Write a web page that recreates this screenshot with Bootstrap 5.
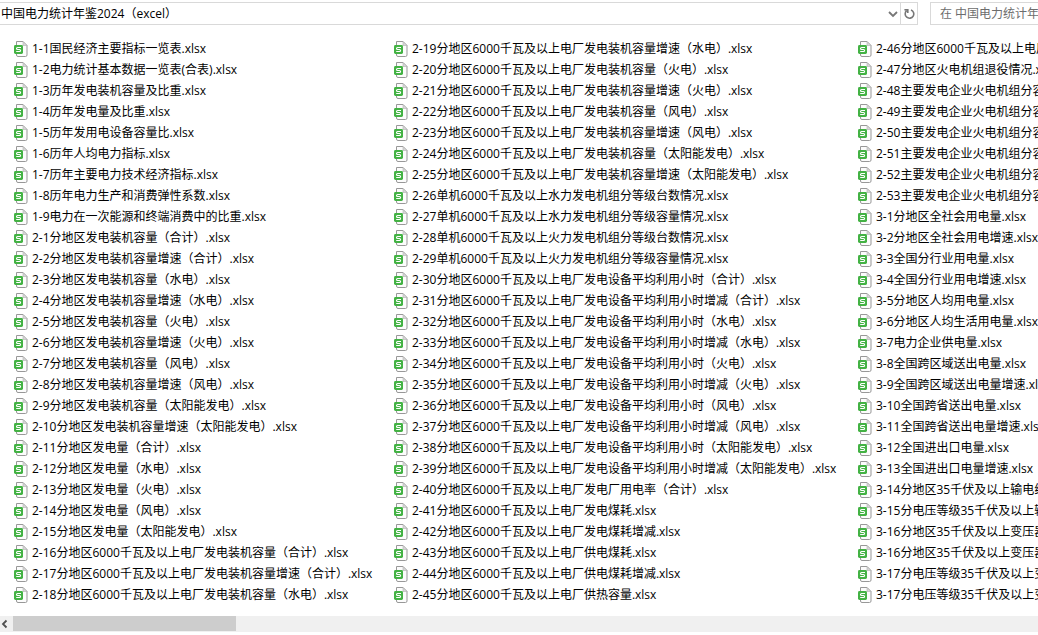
<!DOCTYPE html>
<html lang="zh-CN">
<head>
<meta charset="utf-8">
<meta name="viewport" content="width=device-width, initial-scale=1">
<title>中国电力统计年鉴2024（excel）</title>
<link href="https://cdn.jsdelivr.net/npm/bootstrap@5.3.0/dist/css/bootstrap.min.css" rel="stylesheet">
<style>
body { font: 12px/21px "Open Sans", "Noto Sans", "Noto Sans CJK SC", sans-serif; color: #000; background: #fff; }
.toolbar { height: 25px; padding-top: 2px; }
.address, .search { border: 1px solid #d9d9d9; }
.address { flex: 0 0 918px; border-left: 0; padding-left: 1px; }
.search { flex: 1 0 0; border-right: 0; margin-left: 12px; padding-left: 9px; }
.toolbar input { font: inherit; color: #000; height: 21px; min-width: 0; outline: 0; }
.search input, .search input::placeholder { color: #6d6d6d; opacity: 1; }
.tool { border: 0; background: none; padding: 0; display: grid; place-items: center; }
.reload { width: 17px; border-left: 1px solid #d9d9d9; }
.files { padding: 13px 0 11px 13px; }
.files ul { flex: none; }
.first { width: 380px; }
.second { width: 464px; }
.files a { display: flex; align-items: center; gap: 3px; height: 21px; color: #000; text-decoration: none; }
.xls { width: 16px; height: 16px; flex: none; }
.scrollbar { height: 16px; background: #f0f0f0; }
.scrollbar .tool { width: 13px; }
.thumb { width: 223px; height: 15px; background: #cdcdcd; }
</style>
</head>
<body class="overflow-hidden">
<svg class="d-none">
<symbol id="xls" viewBox="0 0 16 16">
<path d="M3.5.5H10l4 4V14a1.5 1.5 0 0 1-1.5 1.5H5A1.5 1.5 0 0 1 3.5 14z" fill="#fcfcfc" stroke="#989898"/>
<path d="M10 .5v4h4z" fill="#d8d8d8" stroke="#b0b0b0" stroke-width=".6"/>
<rect x="1" y="4" width="9" height="9" rx="1.4" fill="#43b244"/>
<path d="M8 6.5H4.6Q3.5 6.5 3.5 7.5T4.6 8.5H6.5Q7.6 8.5 7.6 9.5T6.5 10.5H3.2" fill="none" stroke="#fff" stroke-width="1.1"/>
</symbol>
</svg>
<header class="toolbar d-flex">
<div class="address d-flex">
<input class="flex-grow-1 border-0 p-0 bg-transparent" type="text" aria-label="地址" value="中国电力统计年鉴2024（excel）">
<button class="tool" type="button" aria-label="以前的位置"><svg width="16" height="12" viewBox="0 0 16 12"><path d="M5 4l4 4 4-4" fill="none" stroke="#777" stroke-width="1.8"/></svg></button>
<button class="tool reload" type="button" aria-label="刷新"><svg width="12" height="12" viewBox="0 0 12 12"><path d="M8 1.9A4.3 4.3 0 1 1 3.6 2.7M1.4 1.7h3.4v3.4" fill="none" stroke="#777" stroke-width="1.6"/></svg></button>
</div>
<div class="search d-flex">
<input class="flex-grow-1 border-0 p-0 bg-transparent" type="search" aria-label="搜索" placeholder="在 中国电力统计年鉴2024（excel）中搜索">
</div>
</header>
<main class="files d-flex text-nowrap">
<ul class="list-unstyled mb-0 first">
<li><a href="#"><svg class="xls"><use href="#xls"/></svg>1-1国民经济主要指标一览表.xlsx</a></li>
<li><a href="#"><svg class="xls"><use href="#xls"/></svg>1-2电力统计基本数据一览表(合表).xlsx</a></li>
<li><a href="#"><svg class="xls"><use href="#xls"/></svg>1-3历年发电装机容量及比重.xlsx</a></li>
<li><a href="#"><svg class="xls"><use href="#xls"/></svg>1-4历年发电量及比重.xlsx</a></li>
<li><a href="#"><svg class="xls"><use href="#xls"/></svg>1-5历年发用电设备容量比.xlsx</a></li>
<li><a href="#"><svg class="xls"><use href="#xls"/></svg>1-6历年人均电力指标.xlsx</a></li>
<li><a href="#"><svg class="xls"><use href="#xls"/></svg>1-7历年主要电力技术经济指标.xlsx</a></li>
<li><a href="#"><svg class="xls"><use href="#xls"/></svg>1-8历年电力生产和消费弹性系数.xlsx</a></li>
<li><a href="#"><svg class="xls"><use href="#xls"/></svg>1-9电力在一次能源和终端消费中的比重.xlsx</a></li>
<li><a href="#"><svg class="xls"><use href="#xls"/></svg>2-1分地区发电装机容量（合计）.xlsx</a></li>
<li><a href="#"><svg class="xls"><use href="#xls"/></svg>2-2分地区发电装机容量增速（合计）.xlsx</a></li>
<li><a href="#"><svg class="xls"><use href="#xls"/></svg>2-3分地区发电装机容量（水电）.xlsx</a></li>
<li><a href="#"><svg class="xls"><use href="#xls"/></svg>2-4分地区发电装机容量增速（水电）.xlsx</a></li>
<li><a href="#"><svg class="xls"><use href="#xls"/></svg>2-5分地区发电装机容量（火电）.xlsx</a></li>
<li><a href="#"><svg class="xls"><use href="#xls"/></svg>2-6分地区发电装机容量增速（火电）.xlsx</a></li>
<li><a href="#"><svg class="xls"><use href="#xls"/></svg>2-7分地区发电装机容量（风电）.xlsx</a></li>
<li><a href="#"><svg class="xls"><use href="#xls"/></svg>2-8分地区发电装机容量增速（风电）.xlsx</a></li>
<li><a href="#"><svg class="xls"><use href="#xls"/></svg>2-9分地区发电装机容量（太阳能发电）.xlsx</a></li>
<li><a href="#"><svg class="xls"><use href="#xls"/></svg>2-10分地区发电装机容量增速（太阳能发电）.xlsx</a></li>
<li><a href="#"><svg class="xls"><use href="#xls"/></svg>2-11分地区发电量（合计）.xlsx</a></li>
<li><a href="#"><svg class="xls"><use href="#xls"/></svg>2-12分地区发电量（水电）.xlsx</a></li>
<li><a href="#"><svg class="xls"><use href="#xls"/></svg>2-13分地区发电量（火电）.xlsx</a></li>
<li><a href="#"><svg class="xls"><use href="#xls"/></svg>2-14分地区发电量（风电）.xlsx</a></li>
<li><a href="#"><svg class="xls"><use href="#xls"/></svg>2-15分地区发电量（太阳能发电）.xlsx</a></li>
<li><a href="#"><svg class="xls"><use href="#xls"/></svg>2-16分地区6000千瓦及以上电厂发电装机容量（合计）.xlsx</a></li>
<li><a href="#"><svg class="xls"><use href="#xls"/></svg>2-17分地区6000千瓦及以上电厂发电装机容量增速（合计）.xlsx</a></li>
<li><a href="#"><svg class="xls"><use href="#xls"/></svg>2-18分地区6000千瓦及以上电厂发电装机容量（水电）.xlsx</a></li>
</ul>
<ul class="list-unstyled mb-0 second">
<li><a href="#"><svg class="xls"><use href="#xls"/></svg>2-19分地区6000千瓦及以上电厂发电装机容量增速（水电）.xlsx</a></li>
<li><a href="#"><svg class="xls"><use href="#xls"/></svg>2-20分地区6000千瓦及以上电厂发电装机容量（火电）.xlsx</a></li>
<li><a href="#"><svg class="xls"><use href="#xls"/></svg>2-21分地区6000千瓦及以上电厂发电装机容量增速（火电）.xlsx</a></li>
<li><a href="#"><svg class="xls"><use href="#xls"/></svg>2-22分地区6000千瓦及以上电厂发电装机容量（风电）.xlsx</a></li>
<li><a href="#"><svg class="xls"><use href="#xls"/></svg>2-23分地区6000千瓦及以上电厂发电装机容量增速（风电）.xlsx</a></li>
<li><a href="#"><svg class="xls"><use href="#xls"/></svg>2-24分地区6000千瓦及以上电厂发电装机容量（太阳能发电）.xlsx</a></li>
<li><a href="#"><svg class="xls"><use href="#xls"/></svg>2-25分地区6000千瓦及以上电厂发电装机容量增速（太阳能发电）.xlsx</a></li>
<li><a href="#"><svg class="xls"><use href="#xls"/></svg>2-26单机6000千瓦及以上水力发电机组分等级台数情况.xlsx</a></li>
<li><a href="#"><svg class="xls"><use href="#xls"/></svg>2-27单机6000千瓦及以上水力发电机组分等级容量情况.xlsx</a></li>
<li><a href="#"><svg class="xls"><use href="#xls"/></svg>2-28单机6000千瓦及以上火力发电机组分等级台数情况.xlsx</a></li>
<li><a href="#"><svg class="xls"><use href="#xls"/></svg>2-29单机6000千瓦及以上火力发电机组分等级容量情况.xlsx</a></li>
<li><a href="#"><svg class="xls"><use href="#xls"/></svg>2-30分地区6000千瓦及以上电厂发电设备平均利用小时（合计）.xlsx</a></li>
<li><a href="#"><svg class="xls"><use href="#xls"/></svg>2-31分地区6000千瓦及以上电厂发电设备平均利用小时增减（合计）.xlsx</a></li>
<li><a href="#"><svg class="xls"><use href="#xls"/></svg>2-32分地区6000千瓦及以上电厂发电设备平均利用小时（水电）.xlsx</a></li>
<li><a href="#"><svg class="xls"><use href="#xls"/></svg>2-33分地区6000千瓦及以上电厂发电设备平均利用小时增减（水电）.xlsx</a></li>
<li><a href="#"><svg class="xls"><use href="#xls"/></svg>2-34分地区6000千瓦及以上电厂发电设备平均利用小时（火电）.xlsx</a></li>
<li><a href="#"><svg class="xls"><use href="#xls"/></svg>2-35分地区6000千瓦及以上电厂发电设备平均利用小时增减（火电）.xlsx</a></li>
<li><a href="#"><svg class="xls"><use href="#xls"/></svg>2-36分地区6000千瓦及以上电厂发电设备平均利用小时（风电）.xlsx</a></li>
<li><a href="#"><svg class="xls"><use href="#xls"/></svg>2-37分地区6000千瓦及以上电厂发电设备平均利用小时增减（风电）.xlsx</a></li>
<li><a href="#"><svg class="xls"><use href="#xls"/></svg>2-38分地区6000千瓦及以上电厂发电设备平均利用小时（太阳能发电）.xlsx</a></li>
<li><a href="#"><svg class="xls"><use href="#xls"/></svg>2-39分地区6000千瓦及以上电厂发电设备平均利用小时增减（太阳能发电）.xlsx</a></li>
<li><a href="#"><svg class="xls"><use href="#xls"/></svg>2-40分地区6000千瓦及以上电厂发电厂用电率（合计）.xlsx</a></li>
<li><a href="#"><svg class="xls"><use href="#xls"/></svg>2-41分地区6000千瓦及以上电厂发电煤耗.xlsx</a></li>
<li><a href="#"><svg class="xls"><use href="#xls"/></svg>2-42分地区6000千瓦及以上电厂发电煤耗增减.xlsx</a></li>
<li><a href="#"><svg class="xls"><use href="#xls"/></svg>2-43分地区6000千瓦及以上电厂供电煤耗.xlsx</a></li>
<li><a href="#"><svg class="xls"><use href="#xls"/></svg>2-44分地区6000千瓦及以上电厂供电煤耗增减.xlsx</a></li>
<li><a href="#"><svg class="xls"><use href="#xls"/></svg>2-45分地区6000千瓦及以上电厂供热容量.xlsx</a></li>
</ul>
<ul class="list-unstyled mb-0">
<li><a href="#"><svg class="xls"><use href="#xls"/></svg>2-46分地区6000千瓦及以上电厂</a></li>
<li><a href="#"><svg class="xls"><use href="#xls"/></svg>2-47分地区火电机组退役情况.xlsx</a></li>
<li><a href="#"><svg class="xls"><use href="#xls"/></svg>2-48主要发电企业火电机组分容量</a></li>
<li><a href="#"><svg class="xls"><use href="#xls"/></svg>2-49主要发电企业火电机组分容量</a></li>
<li><a href="#"><svg class="xls"><use href="#xls"/></svg>2-50主要发电企业火电机组分容量</a></li>
<li><a href="#"><svg class="xls"><use href="#xls"/></svg>2-51主要发电企业火电机组分容量</a></li>
<li><a href="#"><svg class="xls"><use href="#xls"/></svg>2-52主要发电企业火电机组分容量</a></li>
<li><a href="#"><svg class="xls"><use href="#xls"/></svg>2-53主要发电企业火电机组分容量</a></li>
<li><a href="#"><svg class="xls"><use href="#xls"/></svg>3-1分地区全社会用电量.xlsx</a></li>
<li><a href="#"><svg class="xls"><use href="#xls"/></svg>3-2分地区全社会用电增速.xlsx</a></li>
<li><a href="#"><svg class="xls"><use href="#xls"/></svg>3-3全国分行业用电量.xlsx</a></li>
<li><a href="#"><svg class="xls"><use href="#xls"/></svg>3-4全国分行业用电增速.xlsx</a></li>
<li><a href="#"><svg class="xls"><use href="#xls"/></svg>3-5分地区人均用电量.xlsx</a></li>
<li><a href="#"><svg class="xls"><use href="#xls"/></svg>3-6分地区人均生活用电量.xlsx</a></li>
<li><a href="#"><svg class="xls"><use href="#xls"/></svg>3-7电力企业供电量.xlsx</a></li>
<li><a href="#"><svg class="xls"><use href="#xls"/></svg>3-8全国跨区域送出电量.xlsx</a></li>
<li><a href="#"><svg class="xls"><use href="#xls"/></svg>3-9全国跨区域送出电量增速.xlsx</a></li>
<li><a href="#"><svg class="xls"><use href="#xls"/></svg>3-10全国跨省送出电量.xlsx</a></li>
<li><a href="#"><svg class="xls"><use href="#xls"/></svg>3-11全国跨省送出电量增速.xlsx</a></li>
<li><a href="#"><svg class="xls"><use href="#xls"/></svg>3-12全国进出口电量.xlsx</a></li>
<li><a href="#"><svg class="xls"><use href="#xls"/></svg>3-13全国进出口电量增速.xlsx</a></li>
<li><a href="#"><svg class="xls"><use href="#xls"/></svg>3-14分地区35千伏及以上输电线路</a></li>
<li><a href="#"><svg class="xls"><use href="#xls"/></svg>3-15分电压等级35千伏及以上输电</a></li>
<li><a href="#"><svg class="xls"><use href="#xls"/></svg>3-16分地区35千伏及以上变压器</a></li>
<li><a href="#"><svg class="xls"><use href="#xls"/></svg>3-16分地区35千伏及以上变压器</a></li>
<li><a href="#"><svg class="xls"><use href="#xls"/></svg>3-17分电压等级35千伏及以上变压器</a></li>
<li><a href="#"><svg class="xls"><use href="#xls"/></svg>3-17分电压等级35千伏及以上变压器</a></li>
</ul>
</main>
<div class="scrollbar d-flex">
<button class="tool" type="button" aria-label="向左滚动"><svg width="13" height="16" viewBox="0 0 13 16"><path d="M6.5 4.5L3 8l3.5 3.5" fill="none" stroke="#505050" stroke-width="1.8"/></svg></button>
<div class="thumb"></div>
</div>
</body>
</html>
